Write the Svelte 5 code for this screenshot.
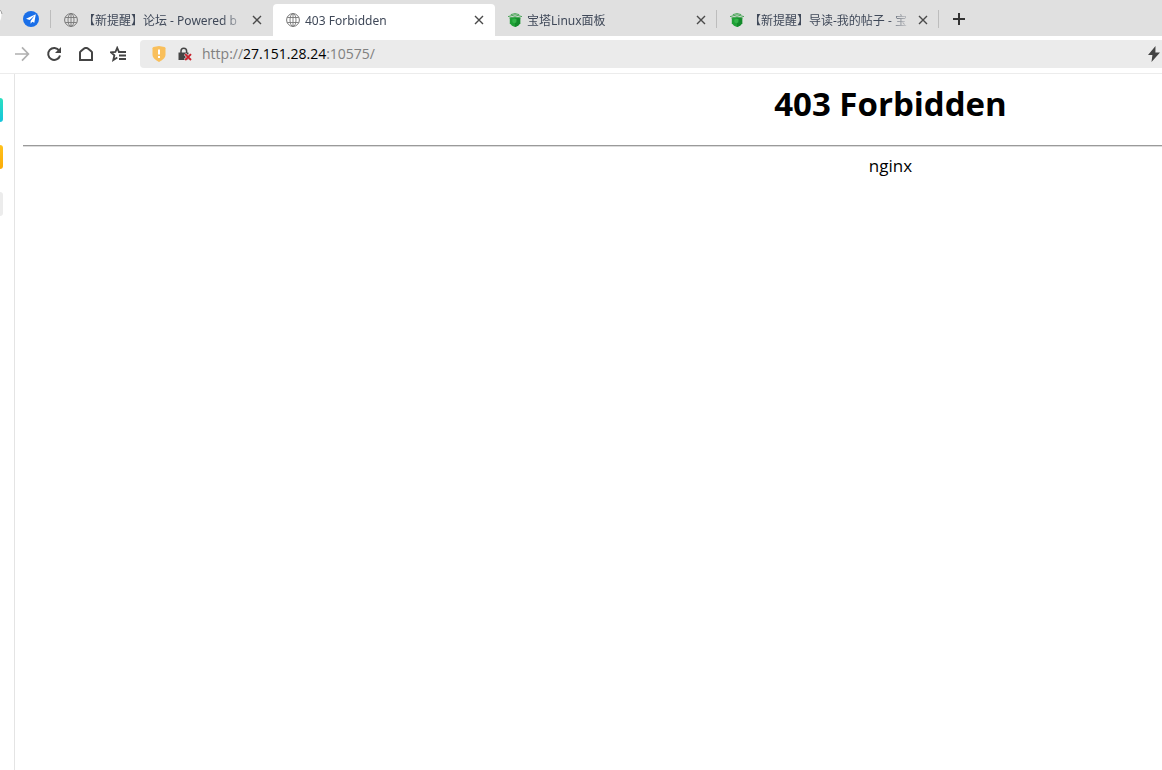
<script lang="ts">
	type Tab = { id: number; title: string; icon: 'globe' | 'panel' };

	let tabs = $state<Tab[]>([
		{ id: 1, title: '【新提醒】论坛 - Powered b', icon: 'globe' },
		{ id: 2, title: '403 Forbidden', icon: 'globe' },
		{ id: 3, title: '宝塔Linux面板', icon: 'panel' },
		{ id: 4, title: '【新提醒】导读-我的帖子 - 宝', icon: 'panel' }
	]);
	let activeId = $state(2);
	let editing = $state(false);
	let address = $state({ scheme: 'http://', host: '27.151.28.24', rest: ':10575/' });
	let url = $derived(address.scheme + address.host + address.rest);

	function closeTab(id: number) {
		tabs = tabs.filter((t) => t.id !== id);
	}
	function addTab() {
		const id = Math.max(0, ...tabs.map((t) => t.id)) + 1;
		tabs = [...tabs, { id, title: '新标签页', icon: 'globe' }];
		activeId = id;
	}
</script>

<div class="browser">
	<header>
		<div class="tab-strip">
			<svg class="edge" width="3" height="36" viewBox="0 0 3 36">
				<path d="M-7 10.500a7.500 7.500 0 0 1 0 15z" fill="#fff" />
				<path d="M-1 9q2.500 2.500 2.500 6t-2.500 7z" fill="#fff" />
				<path d="M-1 9q3 2.500 3 5" fill="none" stroke="#a0a0a0" />
			</svg>
			<button class="pinned" type="button" aria-label="Navigation">
				<svg width="16" height="16" viewBox="0 0 16 16">
					<circle cx="8" cy="8" r="8" fill="#1a6fe8" />
					<path d="M12.800 3.200 3 7.800l3.600 1.200 5-4.600-4 5.600v2.800l1.700-2 2 1z" fill="#fff" />
				</svg>
			</button>
			<div class="tabs">
				{#each tabs as tab (tab.id)}
					<div class="tab" class:active={tab.id === activeId}>
						<button class="tab-main" type="button" onclick={() => (activeId = tab.id)}>
							{#if tab.icon === 'globe'}
								<svg width="14" height="14" viewBox="0 0 14 14" fill="none" stroke="#777">
									<circle cx="7" cy="7" r="6.4" />
									<ellipse cx="7" cy="7" rx="3" ry="6.4" stroke-width=".9" />
									<path d="M7 .6v12.8M1.200 4.500h11.600M1.200 9.500h11.600" stroke-width=".9" />
								</svg>
							{:else}
								<svg width="14" height="14" viewBox="0 0 14 14">
									<path d="M1.8 4.8 7 4l5.2.8v5.4L10 12.7 7 14l-3-1.3-2.2-2.5z" fill="#1fa036" />
									<path d="M7 5.4v8.6l3-1.3 2.2-2.5V4.8z" fill="#148a2b" />
									<path d="M4.2 6.4 7 5.8l1.6.4-.3 3.2L6 10.2l-1.6-1z" fill="#35b54a" />
									<path
										d="M0 3.6 7 1.8l7 1.8M2.8 1.6 7 .6l4.2 1M1.4 5 7 3.8 12.6 5"
										fill="none"
										stroke="#4aa558"
									/>
								</svg>
							{/if}
							<span class="title">{tab.title}</span>
						</button>
						<button
							class="close"
							type="button"
							aria-label="Close tab"
							onclick={() => closeTab(tab.id)}
						>
							<svg width="10" height="10" viewBox="0 0 10 10" stroke="#4a4a4a" stroke-width="1.4">
								<path d="m1 1 8 8M9 1 1 9" />
							</svg>
						</button>
					</div>
				{/each}
			</div>
			<button class="new-tab" type="button" aria-label="New tab" onclick={addTab}>
				<svg width="12" height="12" viewBox="0 0 12 12" stroke="#333" stroke-width="2">
					<path d="M6 0v12M0 6h12" />
				</svg>
			</button>
		</div>

		<div class="toolbar">
			<button type="button" aria-label="Forward" disabled>
				<svg width="16" height="16" viewBox="0 0 16 16" fill="none" stroke="#b0b0b0" stroke-width="1.7">
					<path d="M1 8h13M8 1.4 14.4 8 8 14.6" />
				</svg>
			</button>
			<button type="button" aria-label="Reload">
				<svg width="16" height="16" viewBox="0 0 16 16" fill="none" stroke="#444" stroke-width="2">
					<path d="M13.2 4.6A6 6 0 1 0 14 9.4" />
					<path d="M15 1v6H9z" fill="#444" stroke="none" />
				</svg>
			</button>
			<button type="button" aria-label="Home">
				<svg width="16" height="16" viewBox="0 0 16 16" fill="none" stroke="#444" stroke-width="2">
					<path d="M2 14V6.6Q2 6 2.5 5.6L5.8 2.7Q6.6 2 7.4 2h1.2q.8 0 1.6.7l3.3 2.9q.5.4.5 1V14z" />
				</svg>
			</button>
			<button type="button" aria-label="Favorites">
				<svg width="16" height="16" viewBox="0 0 16 16" fill="none" stroke="#444" stroke-width="1.8">
					<path d="M9.500 6H9L7.2 1.8 5.4 6 .9 6.3l3.5 3L3.3 14l4-2.5" />
					<path d="M8.500 6h7.500M9 9.500h7M9 13h7" stroke-width="2" />
				</svg>
			</button>
			<div class="address">
				<svg class="shield" width="14" height="16" viewBox="0 0 14 16">
					<path d="M1.500 1 7 0l5.500 1q1 .2 1 1.200V9q0 3.500-6.500 7Q.5 12.500.5 9V2.200Q.5 1.200 1.500 1z" fill="#f9bf5b" />
					<path d="M7 3.500v5M7 10v2" stroke="#fff" stroke-width="2" />
				</svg>
				<svg class="lock" width="14" height="14" viewBox="0 0 14 14">
					<path d="M3 6V4a2.800 2.800 0 0 1 5.600 0v2" fill="none" stroke="#444" stroke-width="1.500" />
					<path d="M.5 5.500h10v7.500H.5z" fill="#444" />
					<path d="m7 7 6 6M13 7l-6 6" stroke="#ebebeb" stroke-width="3" />
					<path d="m7.200 7.200 5.800 5.800M13 7.200 7.200 13" stroke="#c8202b" stroke-width="1.900" />
				</svg>
				<div class="field">
					<input
						id="url"
						type="text"
						aria-label="Address"
						value={editing ? url : ''}
						onfocus={() => (editing = true)}
						onblur={() => (editing = false)}
					/>
					{#if !editing}
						<label for="url">{address.scheme}<b>{address.host}</b>{address.rest}</label>
					{/if}
				</div>
				<button class="boost" type="button" aria-label="Speed mode">
					<svg width="14" height="16" viewBox="0 0 14 16">
						<path d="M8.500 0 1 9h4.400L4.500 16 13 6.600H8.400z" fill="#444" />
					</svg>
				</button>
			</div>
		</div>
	</header>

	<div class="content">
		<aside class="sidebar">
			<span class="chip teal"></span>
			<span class="chip amber"></span>
			<span class="chip grey"></span>
		</aside>
		<main>
			<h1>403 Forbidden</h1>
			<hr />
			<p>nginx</p>
		</main>
	</div>
</div>

<style>
	:global(body) {
		background: #fff;
	}
	.browser {
		display: flex;
		flex-direction: column;
		min-height: 100vh;
		overflow: hidden;
		font-family: 'Open Sans', 'Noto Sans CJK SC', sans-serif;
	}
	button {
		display: flex;
		align-items: center;
		justify-content: center;
		padding: 0;
		border: 0;
		background: none;
		font: inherit;
		color: inherit;
	}
	svg {
		flex: none;
		display: block;
	}

	.tab-strip {
		display: flex;
		height: 36px;
		background: #e0e0e0;
	}
	.pinned {
		flex: none;
		width: 48px;
		padding: 2px 0 0 8px;
		background: linear-gradient(#bdbdbd, #bdbdbd) right 0 top 10px / 1px 18px no-repeat;
	}
	.tabs {
		display: flex;
		min-width: 0;
	}
	.tab {
		display: flex;
		flex: 0 1 222px;
		width: 222px;
		box-sizing: border-box;
		min-width: 0;
		height: 32px;
		margin-top: 4px;
		padding: 0 11px 0 13px;
		font-family: 'Noto Sans', 'Noto Sans CJK SC', sans-serif;
		font-size: 12px;
		color: #3f4858;
		background: linear-gradient(#bdbdbd, #bdbdbd) right 0 top 6px / 1px 18px no-repeat;
	}
	.tab:has(+ .active) {
		background: none;
	}
	.tab.active {
		background: #fff;
		border-radius: 4px 4px 0 0;
	}
	.tab-main {
		flex: 1;
		min-width: 0;
		gap: 5px;
		justify-content: flex-start;
	}
	.title {
		flex: 1;
		overflow: hidden;
		white-space: nowrap;
		text-align: left;
		padding-top: 2px;
		line-height: 18px;
		mask-image: linear-gradient(to right, #000 calc(100% - 24px), transparent);
	}
	.close {
		width: 10px;
		margin-left: 6px;
	}
	.new-tab {
		width: 40px;
		padding-top: 2px;
	}

	.toolbar {
		display: flex;
		align-items: center;
		height: 36px;
		padding: 0 0 1px 6px;
		border-bottom: 1px solid #ececec;
		background: #fff;
	}
	.toolbar button {
		flex: none;
		width: 32px;
		height: 28px;
	}
	.address {
		display: flex;
		flex: 1;
		align-items: center;
		min-width: 0;
		height: 28px;
		margin-left: 6px;
		padding-left: 12px;
		border-radius: 4px 0 0 4px;
		background: #ebebeb;
	}
	.lock {
		margin: 0 10px 0 12px;
	}
	.field {
		position: relative;
		flex: 1;
		min-width: 0;
		height: 28px;
		font-size: 14px;
		line-height: 28px;
	}
	.field input {
		width: 100%;
		height: 28px;
		padding: 0;
		border: 0;
		outline: 0;
		background: none;
		font: inherit;
	}
	.field label {
		position: absolute;
		inset: 0;
		overflow: hidden;
		white-space: nowrap;
		color: #808080;
		pointer-events: none;
	}
	.field b {
		font-weight: 400;
		color: #000;
	}
	.toolbar .boost {
		width: 16px;
	}

	.content {
		display: flex;
		flex: 1;
	}
	.sidebar {
		display: flex;
		flex: 0 0 14px;
		flex-direction: column;
		gap: 23px;
		padding-top: 24px;
		border-right: 1px solid #e4e4e4;
	}
	.chip {
		width: 3px;
		height: 24px;
		border-radius: 0 4px 4px 0;
	}
	.teal {
		background: linear-gradient(#2be0c0, #14c4dc);
	}
	.amber {
		background: linear-gradient(#ffc21c, #fbab08);
	}
	.grey {
		background: #ececec;
	}
	/* the page is wider than the window and runs off its right edge */
	main {
		flex: 0 0 calc(150% + 8px);
		box-sizing: border-box;
		padding: 8px;
		text-align: center;
		color: #000;
	}
	h1 {
		margin: 0;
		font-size: 33px;
		line-height: 44px;
	}
	hr {
		margin: 19px 0 7px;
		border: 1px solid #9a9a9a;
		border-width: 1px 0 0;
		border-bottom: 1px solid #dcdcdc;
	}
	p {
		margin: 0;
		font-size: 17px;
		line-height: 24px;
	}
</style>
